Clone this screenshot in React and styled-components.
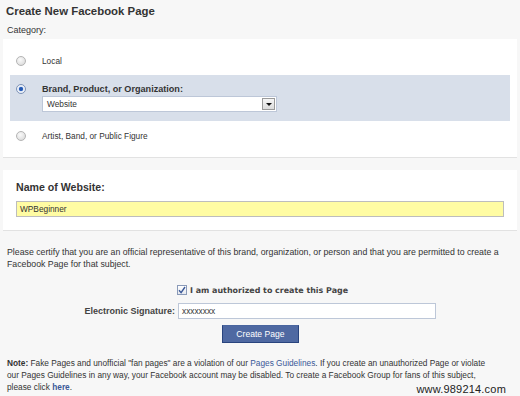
import React from 'react';
import styled, { createGlobalStyle } from 'styled-components';

const options = [
  { id: 'local', label: 'Local' },
  { id: 'brand', label: 'Brand, Product, or Organization:', selected: true },
  { id: 'artist', label: 'Artist, Band, or Public Figure' },
];

export default function App() {
  return (
    <Page>
      <GlobalStyle />
      <Title>Create New Facebook Page</Title>
      <Caption>Category:</Caption>
      <Panel>
        {options.map((o) =>
          o.selected ? (
            <Option key={o.id} $selected>
              <Radio $checked />
              <OptionBody>
                <OptionLabel $bold>{o.label}</OptionLabel>
                <Select>
                  <span>Website</span>
                  <SelectArrow />
                </Select>
              </OptionBody>
            </Option>
          ) : (
            <Option key={o.id}>
              <Radio />
              <OptionLabel>{o.label}</OptionLabel>
            </Option>
          )
        )}
      </Panel>
      <NamePanel>
        <NameLabel>Name of Website:</NameLabel>
        <NameInput>WPBeginner</NameInput>
      </NamePanel>
      <Certify>
        Please certify that you are an official representative of this brand, organization, or person and that you are
        permitted to create a
        <br />
        Facebook Page for that subject.
      </Certify>
      <FormGrid>
        <span />
        <CheckRow>
          <Checkbox>
            <svg width="8" height="8" viewBox="0 0 8 8">
              <path d="M1 4.2 L3.1 6.6 L7 1" fill="none" stroke="#3b5998" strokeWidth="1.4" />
            </svg>
          </Checkbox>
          <CheckLabel>I am authorized to create this Page</CheckLabel>
        </CheckRow>
        <FieldLabel>Electronic Signature:</FieldLabel>
        <TextField>xxxxxxxx</TextField>
      </FormGrid>
      <ButtonRow>
        <Button>Create Page</Button>
      </ButtonRow>
      <Note>
        <b>Note:</b> Fake Pages and unofficial "fan pages" are a violation of our <Link>Pages Guidelines</Link>. If you
        create an unauthorized Page or violate
        <br />
        our Pages Guidelines in any way, your Facebook account may be disabled. To create a Facebook Group for fans of
        this subject,
        <br />
        please click <Link $bold>here</Link>.
      </Note>
      <Watermark>www.989214.com</Watermark>
    </Page>
  );
}

const GlobalStyle = createGlobalStyle`
  body {
    margin: 0;
    background: #f7f7f7;
    font-family: "Liberation Sans", Arial, sans-serif;
    color: #333;
  }
`;

const Page = styled.div`
  position: relative;
  width: 520px;
  height: 396px;
  overflow: hidden;
  padding-top: 4px;
  box-sizing: border-box;
`;

const Title = styled.h1`
  margin: 0 0 0 6px;
  font-size: 11.4px;
  line-height: 14px;
  font-weight: bold;
  color: #333;
`;

const Caption = styled.div`
  margin: 6px 0 3px 7px;
  font-size: 9px;
  line-height: 12px;
`;

const Panel = styled.div`
  margin: 0 3px;
  padding: 7px;
  background: #fff;
  border-bottom: 1px solid #e2e2e2;
`;

const Option = styled.div`
  display: flex;
  align-items: ${(p) => (p.$selected ? 'flex-start' : 'center')};
  gap: 16px;
  min-height: 29px;
  padding: ${(p) => (p.$selected ? '8px 6px 9px' : '0 6px')};
  background: ${(p) => (p.$selected ? '#d8dfea' : 'transparent')};
  box-sizing: border-box;
`;

const Radio = styled.span`
  flex: none;
  width: 10px;
  height: 10px;
  margin-top: ${(p) => (p.$checked ? '1px' : '0')};
  border-radius: 50%;
  border: 1px solid ${(p) => (p.$checked ? '#7d93b8' : '#b4b4b4')};
  box-sizing: border-box;
  background: ${(p) =>
    p.$checked
      ? 'radial-gradient(circle, #1f4fa0 0, #2d64c0 1.8px, #e8eef8 2.6px, #f4f4f4 100%)'
      : 'radial-gradient(circle at 40% 35%, #fafafa 0, #e4e4e4 60%, #d2d2d2 100%)'};
`;

const OptionBody = styled.div`
  display: flex;
  flex-direction: column;
  gap: 1px;
`;

const OptionLabel = styled.span`
  font-size: ${(p) => (p.$bold ? '9.1px' : '8.3px')};
  font-weight: ${(p) => (p.$bold ? 'bold' : 'normal')};
  line-height: 12px;
`;

const Select = styled.div`
  display: flex;
  align-items: center;
  justify-content: space-between;
  width: 235px;
  height: 16px;
  padding: 0 1px 0 4px;
  background: #fff;
  border: 1px solid #bdc7d8;
  box-sizing: border-box;
  font-size: 8.3px;
`;

const SelectArrow = styled.span`
  position: relative;
  width: 13px;
  height: 12px;
  border: 1px solid #9a9a9a;
  background: linear-gradient(#f6f6f6, #dcdcdc);
  box-sizing: border-box;

  &::after {
    content: '';
    position: absolute;
    left: 3px;
    top: 4px;
    border-left: 3px solid transparent;
    border-right: 3px solid transparent;
    border-top: 3px solid #111;
  }
`;

const NamePanel = styled.div`
  margin: 12px 3px 0;
  padding: 11px 13px 13px;
  background: #fff;
  border-bottom: 1px solid #e2e2e2;
`;

const NameLabel = styled.div`
  font-size: 10.6px;
  line-height: 12px;
  font-weight: bold;
`;

const NameInput = styled.div`
  display: flex;
  align-items: center;
  margin-top: 8px;
  height: 16px;
  padding-left: 3px;
  background: #fffca3;
  border: 1px solid #bdbdbd;
  box-sizing: border-box;
  font-size: 8.3px;
`;

const Certify = styled.p`
  margin: 15px 0 0 7px;
  font-size: 8.75px;
  line-height: 12px;
  white-space: nowrap;
`;

const FormGrid = styled.div`
  display: grid;
  grid-template-columns: 175px 258px;
  column-gap: 3px;
  row-gap: 7px;
  align-items: center;
  margin-top: 14px;
`;

const CheckRow = styled.div`
  display: flex;
  align-items: center;
  gap: 3px;
  height: 12px;
  margin-left: -1px;
`;

const Checkbox = styled.span`
  display: flex;
  align-items: center;
  justify-content: center;
  width: 10px;
  height: 10px;
  border: 1px solid #8a9ab8;
  background: linear-gradient(#fff, #e6e9ef);
  box-sizing: border-box;
`;

const CheckLabel = styled.span`
  font-family: "DejaVu Sans", Verdana, sans-serif;
  font-size: 7.95px;
  font-weight: bold;
  color: #444;
`;

const FieldLabel = styled.span`
  text-align: right;
  font-size: 9px;
  font-weight: bold;
  color: #444;
`;

const TextField = styled.div`
  display: flex;
  align-items: center;
  height: 16px;
  padding-left: 3px;
  background: #fff;
  border: 1px solid #bdc7d8;
  box-sizing: border-box;
  font-size: 8.3px;
`;

const ButtonRow = styled.div`
  display: flex;
  justify-content: center;
  margin-top: 6px;
  padding-left: 1px;
`;

const Button = styled.button`
  width: 77px;
  height: 18px;
  padding: 0;
  border: 1px solid #29447e;
  border-top-color: #4a66a0;
  background: #4f69a2;
  color: #fff;
  font-family: "Liberation Sans", Arial, sans-serif;
  font-size: 8.6px;
`;

const Note = styled.p`
  margin: 14px 0 0 7px;
  font-size: 8.3px;
  line-height: 12px;
  white-space: nowrap;
`;

const Link = styled.span`
  color: #3b5998;
  font-weight: ${(p) => (p.$bold ? 'bold' : 'normal')};
`;

const Watermark = styled.div`
  position: absolute;
  right: 14px;
  bottom: 1px;
  font-family: "Liberation Sans", Arial, sans-serif;
  font-size: 11px;
  color: #222;
  letter-spacing: 0.2px;
`;
